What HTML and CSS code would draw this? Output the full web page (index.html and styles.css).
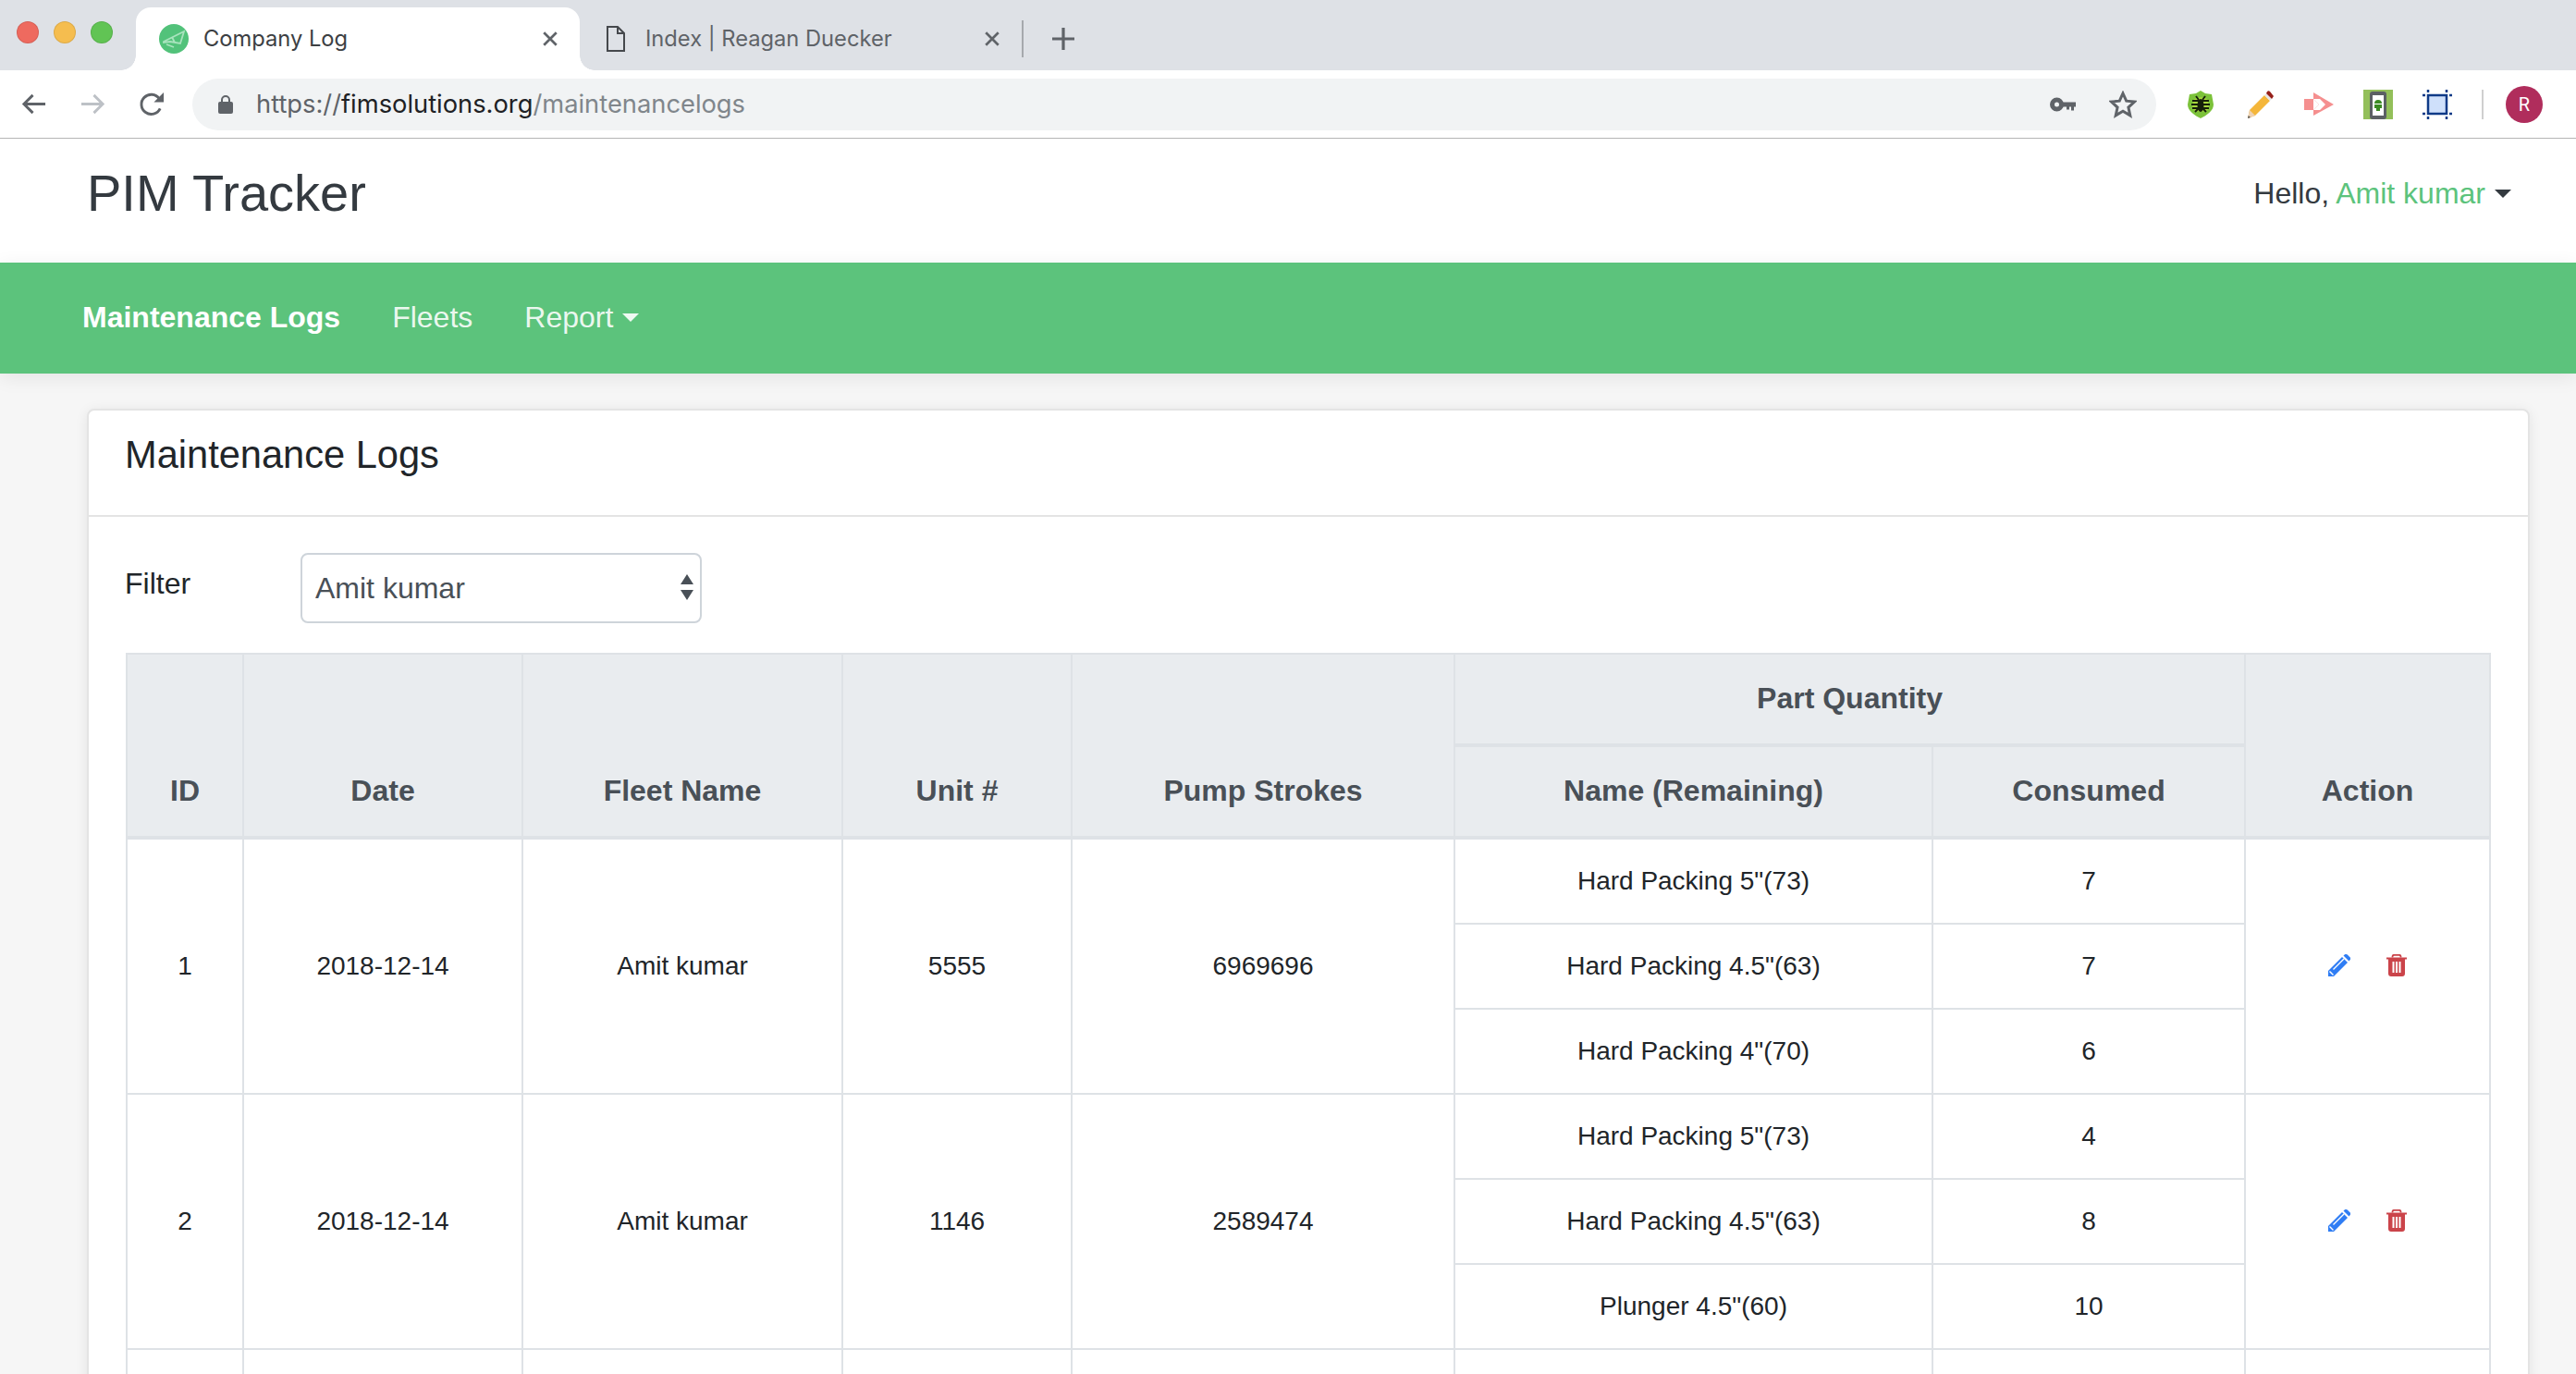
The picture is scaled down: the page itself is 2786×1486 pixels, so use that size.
FILE: index.html
```html
<!DOCTYPE html>
<html lang="en">
<head>
<meta charset="utf-8">
<title>Company Log</title>
<link rel="stylesheet" href="styles.css">
</head>
<body>
<div class="tabstrip">
  <div class="lights"><span class="light red"></span><span class="light amber"></span><span class="light green"></span></div>
  <div class="tab tab-active">
    <svg class="favicon" viewBox="0 0 32 32"><circle cx="16" cy="16" r="16" fill="#52c27a"/><path d="M5 19l22-11-4 13-11-2-7 1zM8 22l8 3M14 14l3 6" fill="none" stroke="#a8e3bd" stroke-width="1.800"/></svg>
    <span class="tab-title">Company Log</span>
    <svg class="tab-close" viewBox="0 0 16 16"><path d="M2 2l12 12M14 2L2 14" stroke="#5f6368" stroke-width="2.400" fill="none"/></svg>
  </div>
  <div class="tab">
    <svg class="doc" viewBox="0 0 20 28"><path d="M1 1h11l7 7v19H1zM12 1v7h7" fill="none" stroke="#45484c" stroke-width="2"/></svg>
    <span class="tab-title muted">Index | Reagan Duecker</span>
    <svg class="tab-close" viewBox="0 0 16 16"><path d="M2 2l12 12M14 2L2 14" stroke="#5f6368" stroke-width="2.400" fill="none"/></svg>
  </div>
  <span class="tab-sep"></span>
  <svg class="plus" viewBox="0 0 24 24"><path d="M12 0v24M0 12h24" stroke="#5f6368" stroke-width="3.200" fill="none"/></svg>
</div>

<div class="toolbar">
  <svg class="nav-ico" viewBox="0 0 28 24"><path d="M27 12H3M13 2L3 12l10 10" fill="none" stroke="#5f6368" stroke-width="3"/></svg>
  <svg class="nav-ico" viewBox="0 0 28 24"><path d="M1 12h24M15 2l10 10-10 10" fill="none" stroke="#bdc1c6" stroke-width="3"/></svg>
  <svg class="nav-ico" viewBox="0 0 28 28"><path d="M23 19a11 11 0 1 1-1-11" fill="none" stroke="#5f6368" stroke-width="3"/><path d="M27 1v11H16z" fill="#5f6368"/></svg>
  <div class="omnibox">
    <svg class="lock" viewBox="0 0 16 20"><path d="M4 8V5a4 4 0 0 1 8 0v3" fill="none" stroke="#5f6368" stroke-width="2"/><rect y="7" width="16" height="13" rx="2" fill="#5f6368"/></svg>
    <span class="url"><span class="url-scheme">https://</span><span class="url-host">fimsolutions.org</span><span class="url-path">/maintenancelogs</span></span>
    <svg class="key" viewBox="0 0 28 16"><circle cx="7.500" cy="8" r="5" fill="none" stroke="#5f6368" stroke-width="5"/><path d="M12 5.500h16v5h-2v4h-3v-4h-2v3h-3v-3h-6z" fill="#5f6368"/></svg>
    <svg class="star" viewBox="0 0 30 30"><path d="M15 3l3.700 8.200 8.800.9-6.600 6 1.900 8.800L15 22.300 7.200 26.900l1.900-8.800-6.600-6 8.800-.9z" fill="none" stroke="#5f6368" stroke-width="3"/></svg>
  </div>
  <div class="extensions">
    <svg class="ext" viewBox="0 0 32 32"><path d="M16 1l5 3 7 1 2 11c0 7-8 12-14 15C10 28 2 23 2 16L4 5l7-1z" fill="#7cc23a"/><path d="M8 12c3-5 13-5 16 0l1 8c-2 5-16 5-18 0z" fill="#a8d63c"/><path d="M7 12h18M6 16h20M7 20h18M10 24l4-4M22 24l-4-4M11 7l3 4M21 7l-3 4" stroke="#16200a" stroke-width="1.900" fill="none"/><ellipse cx="16" cy="17" rx="3.500" ry="7" fill="#16200a"/></svg>
    <svg class="ext" viewBox="0 0 32 32"><path d="M3 31l2-9L21 6l6 6-16 16z" fill="#f4b63a"/><path d="M3 31l2-9 6 6z" fill="#eed2b4"/><path d="M21 6l6 6 2-2-6-6z" fill="#e6e6e6"/><path d="M23 4l6 6 2-3-4-5c-1-1-2-1-3 0z" fill="#96201a"/><path d="M3 31l.700-3 2.300 2z" fill="#555"/></svg>
    <svg class="ext" viewBox="0 0 32 32"><path d="M10 3l22 13-22 12v-6l6-6-6-6zM0 10h10v12H0z" fill="#f58f8f"/><path d="M10 10l6 6-6 6h7l6-6-6-6z" fill="#fff"/></svg>
    <svg class="ext" viewBox="0 0 32 32"><rect width="32" height="32" fill="#93bf5a"/><rect x="7" y="2" width="18" height="30" rx="3" fill="#5b5f63"/><rect x="10" y="6" width="12" height="22" fill="#fff"/><path d="M12 15a4 4 0 0 1 8 0zM12 16h8v4h-2v3h-4v-3h-2z" fill="#3b8a24"/></svg>
    <svg class="ext" viewBox="0 0 32 32"><rect x="6" y="6" width="20" height="20" fill="#cfe0fb" stroke="#0f3a87" stroke-width="2.500"/><path d="M6 0v3M26 0v3M6 29v3M26 29v3M0 6h3M0 26h3M29 6h3M29 26h3" stroke="#0f3a87" stroke-width="2.500"/></svg>
    <span class="ext-sep"></span>
    <span class="avatar">R</span>
  </div>
</div>

<header class="site-header">
  <h3 class="brand">PIM Tracker</h3>
  <div class="greeting">Hello, <a class="user-link caret" href="#">Amit kumar</a></div>
</header>

<nav class="mainnav">
  <a class="nav-link active" href="#">Maintenance Logs</a>
  <a class="nav-link" href="#">Fleets</a>
  <a class="nav-link caret" href="#">Report</a>
</nav>

<main class="content">
  <section class="card">
    <div class="card-header"><h4 class="card-title">Maintenance Logs</h4></div>
    <div class="card-body">
      <div class="filter">
        <label class="filter-label" for="filter-user">Filter</label>
        <div class="select-wrap">
          <select class="select" id="filter-user"><option>Amit kumar</option></select>
          <svg class="select-arrows" viewBox="0 0 14 28"><path d="M7 0l7 11H0zM7 28L0 17h14z" fill="#495057"/></svg>
        </div>
      </div>
      <table class="logs">
        <colgroup>
          <col class="c-id"><col class="c-date"><col class="c-fleet"><col class="c-unit"><col class="c-pump"><col class="c-name"><col class="c-cons"><col class="c-action">
        </colgroup>
        <thead>
          <tr>
            <th rowspan="2">ID</th><th rowspan="2">Date</th><th rowspan="2">Fleet Name</th><th rowspan="2">Unit #</th><th rowspan="2">Pump Strokes</th>
            <th colspan="2">Part Quantity</th>
            <th rowspan="2">Action</th>
          </tr>
          <tr><th>Name (Remaining)</th><th>Consumed</th></tr>
        </thead>
        <tbody>
          <tr>
            <td rowspan="3">1</td><td rowspan="3">2018-12-14</td><td rowspan="3">Amit kumar</td><td rowspan="3">5555</td><td rowspan="3">6969696</td>
            <td>Hard Packing 5"(73)</td><td>7</td>
            <td rowspan="3" class="actions">
              <svg class="ico-edit" viewBox="0 0 24 24"><path d="M0 18L15 3l6 6L6 24H0z" fill="#2f7df4"/><path d="M16.500 1.500L18 .3c1-.5 2-.4 2.800.3l2.700 2.700c.8.800.8 2 .2 2.800L22.500 7.500z" fill="#2f7df4"/><path d="M5.500 16.500L17 5M1.500 18.500l4 4M3 20l1.500 1.500" stroke="#fff" stroke-width="1.400" fill="none"/></svg>
              <svg class="ico-trash" viewBox="0 0 22 24"><path d="M6.500 3.500V2.500C6.500 1.300 7.300.8 8.500.8h5c1.200 0 2 .5 2 1.700v1" fill="none" stroke="#cb444a" stroke-width="1.800"/><path d="M0 3.500h22v2H0z" fill="#cb444a"/><path d="M2 5h18v16c0 1.800-1.200 3-3 3H5c-1.800 0-3-1.200-3-3z" fill="#cb444a"/><path d="M7.500 8v12M11 8v12M14.500 8v12" stroke="#fff" stroke-width="2"/></svg>
            </td>
          </tr>
          <tr><td>Hard Packing 4.5"(63)</td><td>7</td></tr>
          <tr><td>Hard Packing 4"(70)</td><td>6</td></tr>
          <tr>
            <td rowspan="3">2</td><td rowspan="3">2018-12-14</td><td rowspan="3">Amit kumar</td><td rowspan="3">1146</td><td rowspan="3">2589474</td>
            <td>Hard Packing 5"(73)</td><td>4</td>
            <td rowspan="3" class="actions">
              <svg class="ico-edit" viewBox="0 0 24 24"><path d="M0 18L15 3l6 6L6 24H0z" fill="#2f7df4"/><path d="M16.500 1.500L18 .3c1-.5 2-.4 2.800.3l2.700 2.700c.8.800.8 2 .2 2.800L22.500 7.500z" fill="#2f7df4"/><path d="M5.500 16.500L17 5M1.500 18.500l4 4M3 20l1.500 1.500" stroke="#fff" stroke-width="1.400" fill="none"/></svg>
              <svg class="ico-trash" viewBox="0 0 22 24"><path d="M6.500 3.500V2.500C6.500 1.300 7.300.8 8.500.8h5c1.200 0 2 .5 2 1.700v1" fill="none" stroke="#cb444a" stroke-width="1.800"/><path d="M0 3.500h22v2H0z" fill="#cb444a"/><path d="M2 5h18v16c0 1.800-1.200 3-3 3H5c-1.800 0-3-1.200-3-3z" fill="#cb444a"/><path d="M7.500 8v12M11 8v12M14.500 8v12" stroke="#fff" stroke-width="2"/></svg>
            </td>
          </tr>
          <tr><td>Hard Packing 4.5"(63)</td><td>8</td></tr>
          <tr><td>Plunger 4.5"(60)</td><td>10</td></tr>
          <tr class="row-cut"><td></td><td></td><td></td><td></td><td></td><td></td><td></td><td></td></tr>
        </tbody>
      </table>
    </div>
  </section>
</main>
</body>
</html>
```

FILE: styles.css
```css
* { box-sizing: border-box; }
html, body { height: 1486px; overflow: hidden; }
body {
  margin: 0;
  background: #f6f6f6;
  color: #212529;
  font-family: "Liberation Sans", Arial, sans-serif;
  font-size: 32px;
  line-height: 1.5;
}

/* Browser chrome */
.tabstrip {
  display: flex;
  align-items: center;
  height: 76px;
  padding-top: 8px;
  background: #dee1e6;
  font-family: Inter, "Noto Sans", sans-serif;
  font-size: 23.700px;
}
.lights { display: flex; gap: 16px; margin: 0 25px 14px 18px; }
.light { width: 24px; height: 24px; border-radius: 50%; border: 1px solid rgba(0,0,0,.1); }
.light.red { background: #ee6a5f; }
.light.amber { background: #f5bd4f; }
.light.green { background: #61c454; }
.tab {
  display: flex;
  align-items: center;
  position: relative;
  width: 478px;
  height: 68px;
  padding: 0 23px 0 29px;
}
.tab-active {
  width: 480px;
  padding-left: 25px;
  background: #fff;
  border-radius: 16px 16px 0 0;
}
.tab-active::before, .tab-active::after {
  content: "";
  position: absolute;
  bottom: 0;
  width: 16px;
  height: 16px;
}
.tab-active::before { left: -16px; background: radial-gradient(circle at 0 0, transparent 15.500px, #fff 16px); }
.tab-active::after { right: -16px; background: radial-gradient(circle at 100% 0, transparent 15.500px, #fff 16px); }
.favicon { width: 32px; height: 32px; margin-right: 16px; flex: none; }
.doc { width: 20px; height: 28px; margin-right: 22px; flex: none; }
.tab-title { color: #3c4043; white-space: nowrap; }
.tab-title.muted { color: #5f6368; }
.tab-close { width: 18px; height: 18px; margin-left: auto; flex: none; }
.tab-sep { width: 2px; height: 40px; background: #a6a9ad; flex: none; }
.plus { width: 24px; height: 24px; margin-left: 31px; flex: none; }

.toolbar {
  display: flex;
  align-items: center;
  height: 74px;
  padding: 0 36px 0 23px;
  background: #fff;
  border-bottom: 1px solid #b5b5b5;
  font-family: Inter, "Noto Sans", sans-serif;
}
.nav-ico { width: 27px; height: 27px; margin-right: 37px; flex: none; }
.omnibox {
  display: flex;
  align-items: center;
  flex: none;
  width: 2124px;
  height: 56px;
  margin-left: -7px;
  padding: 0 21px 0 28px;
  background: #f1f3f4;
  border-radius: 28px;
}
.lock { width: 16px; height: 20px; margin-right: 25px; }
.url { font-size: 27.300px; line-height: 1; white-space: nowrap; }
.url-scheme { color: #5f6368; }
.url-host { color: #202124; }
.url-path { color: #80868b; }
.key { width: 28px; height: 16px; margin-left: auto; }
.star { width: 30px; height: 30px; margin-left: 36px; }
.extensions { display: flex; align-items: center; gap: 32px; margin-left: 32px; }
.ext { width: 32px; height: 32px; flex: none; }
.ext-sep { width: 2px; height: 32px; background: #cfcfcf; }
.avatar {
  display: flex;
  align-items: center;
  justify-content: center;
  width: 40px;
  height: 40px;
  margin-left: -8px;
  border-radius: 50%;
  background: #b02d5c;
  color: #fff;
  font-size: 20px;
  font-family: Roboto, sans-serif;
}

/* Page header */
.site-header {
  display: flex;
  justify-content: space-between;
  align-items: flex-start;
  height: 134px;
  padding: 25px 70px 0 94px;
  background: #fff;
  color: #343a40;
}
.brand { margin: 0; font-size: 56px; font-weight: 400; line-height: 1.2; }
.greeting { margin-top: 10px; white-space: nowrap; }
.user-link { color: #5cc37c; text-decoration: none; }
.caret::after {
  content: "";
  display: inline-block;
  margin-left: 10px;
  vertical-align: 6px;
  border-top: 9.600px solid currentColor;
  border-left: 9.600px solid transparent;
  border-right: 9.600px solid transparent;
}
.user-link.caret::after { border-top-color: #343a40; }

.mainnav {
  position: relative;
  display: flex;
  align-items: center;
  gap: 56px;
  height: 120px;
  padding: 0 0 2px 89px;
  background: #5cc37c;
  box-shadow: 0 4px 20px rgba(0,0,0,.08);
}
.nav-link { color: rgba(255,255,255,.9); text-decoration: none; }
.nav-link.active { color: #fff; font-weight: 700; }

/* Content */
.content { padding: 38px 50px 0 94px; }
.card {
  background: #fff;
  border: 2px solid #e4e4e4;
  border-radius: 8px;
  box-shadow: 0 2px 14px rgba(0,0,0,.08);
}
.card-header { padding: 17px 39px 34px; border-bottom: 2px solid #e4e4e4; }
.card-title { margin: 0; font-size: 41.600px; font-weight: 400; line-height: 62px; }
.card-body { padding: 39px 39px 0; }
.filter { display: flex; align-items: flex-start; margin-bottom: 32px; }
.filter-label { width: 190px; padding-top: 9px; }
.select-wrap { position: relative; width: 434px; height: 76px; }
.select {
  display: block;
  width: 100%;
  height: 100%;
  padding: 0 14px;
  border: 2px solid #ced4da;
  border-radius: 8px;
  background: #fff;
  color: #495057;
  font: inherit;
  appearance: none;
}
.select-arrows { position: absolute; right: 9px; top: 23px; width: 14px; height: 28px; pointer-events: none; }

.logs {
  width: 2558px;
  margin-left: 1px;
  table-layout: fixed;
  border-collapse: collapse;
  font-size: 28px;
  text-align: center;
}
.c-id { width: 126px; }
.c-date { width: 302px; }
.c-fleet { width: 346px; }
.c-unit { width: 248px; }
.c-pump { width: 414px; }
.c-name { width: 517px; }
.c-cons { width: 338px; }
.c-action { width: 265px; }
.logs th, .logs td { padding: 24px; border: 2px solid #dee2e6; }
.logs th {
  padding: 23px 24px 25px;
  background: #e9ecef;
  color: #495057;
  font-size: 32px;
  font-weight: 700;
  line-height: 48px;
  vertical-align: bottom;
  border-bottom-width: 4px;
}
.logs td { line-height: 42px; vertical-align: middle; }
.row-cut td { height: 92px; }
.actions svg { vertical-align: -2px; }
.ico-edit { width: 24px; height: 24px; margin-right: 32px; }
.ico-trash { width: 22px; height: 24px; }
```
